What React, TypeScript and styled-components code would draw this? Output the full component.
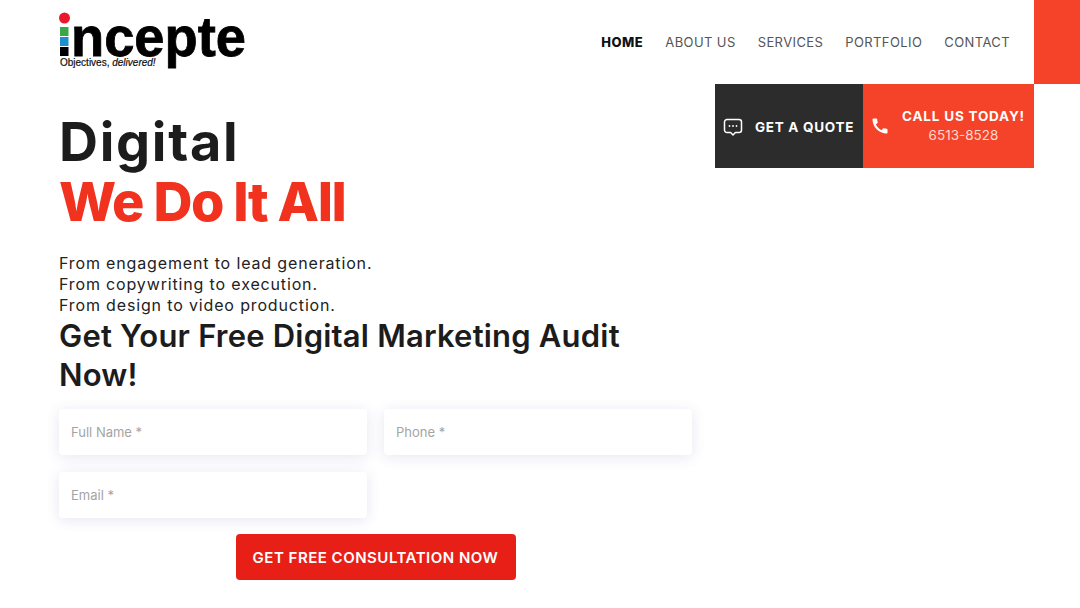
import React from 'react';
import styled, { createGlobalStyle } from 'styled-components';
import { MdCall } from 'react-icons/md';

const GlobalStyle = createGlobalStyle`
  html, body {
    margin: 0;
    padding: 0;
    background: #fff;
  }
  * {
    box-sizing: border-box;
  }
  body {
    font-family: 'Inter', 'Open Sans', sans-serif;
    color: #1c1c1c;
  }
`;

const Page = styled.div`
  width: 1080px;
  height: 608px;
  overflow: hidden;
`;

const Header = styled.header`
  height: 84px;
  display: flex;
  align-items: stretch;
  padding-left: 59px;
`;

const LogoWrap = styled.a`
  display: block;
  width: 190px;
  height: 84px;
`;

const Nav = styled.nav`
  margin-left: auto;
  display: flex;
  align-items: center;
  gap: 22px;
  padding-right: 24px;
`;

const NavLink = styled.a<{ $active?: boolean }>`
  font-size: 13px;
  letter-spacing: ${(p) => (p.$active ? '0.5px' : '0.4px')};
  font-weight: ${(p) => (p.$active ? 800 : 400)};
  color: ${(p) => (p.$active ? '#111' : '#555')};
  white-space: nowrap;
`;

const CornerBlock = styled.div`
  width: 46px;
  background: #f54329;
`;

const Body = styled.div`
  display: flex;
  padding-left: 59px;
`;

const Hero = styled.section`
  width: 633px;
  padding-top: 28px;
`;

const Title = styled.h1`
  margin: 0;
  font-size: 54px;
  line-height: 60px;
  font-weight: 700;
  letter-spacing: 1.7px;
  color: #1c1c1c;
`;

const TitleAccent = styled.span`
  display: block;
  font-weight: 800;
  letter-spacing: -1.45px;
  color: #f0321f;
`;

const Lead = styled.p`
  margin: 21px 0 0;
  font-size: 16px;
  line-height: 21px;
  letter-spacing: 0.85px;
  color: #222;
`;

const SubTitle = styled.h2`
  margin: 0;
  font-size: 31px;
  line-height: 39px;
  font-weight: 600;
  letter-spacing: 0.2px;
  color: #1c1c1c;
`;

const Form = styled.form`
  margin-top: 15px;
  display: grid;
  grid-template-columns: 308px 308px;
  column-gap: 17px;
  row-gap: 16.5px;
`;

const Field = styled.input`
  height: 46px;
  border: 0;
  border-radius: 4px;
  padding: 0 12px;
  background: #fff;
  font-family: inherit;
  font-size: 13px;
  box-shadow: 0 2px 14px rgba(70, 80, 160, 0.14);
  outline: none;
  &::placeholder {
    color: #a4a4a4;
    opacity: 1;
  }
`;

const Submit = styled.button`
  grid-column: 1 / -1;
  justify-self: center;
  width: 280px;
  height: 46px;
  border: 0;
  border-radius: 4px;
  background: #e81f17;
  color: #fff;
  font-family: inherit;
  font-size: 15px;
  font-weight: 600;
  letter-spacing: 0.5px;
  white-space: nowrap;
`;

const Actions = styled.aside`
  margin-left: 23px;
  width: 319px;
  height: 84px;
  display: flex;
`;

const QuoteBox = styled.a`
  width: 148px;
  background: #2c2c2c;
  color: #fff;
  display: flex;
  align-items: center;
  padding: 2px 0 0 8px;
  gap: 12px;
  font-size: 13.5px;
  font-weight: 700;
  letter-spacing: 0.7px;
  white-space: nowrap;
`;

const CallBox = styled.a`
  flex: 1;
  background: #f54329;
  color: #fff;
  display: flex;
  align-items: center;
  padding-left: 7px;
`;

const CallText = styled.div`
  flex: 1;
  text-align: center;
  padding: 0 0 2px 3px;
`;

const CallLabel = styled.div`
  font-size: 13.5px;
  font-weight: 700;
  letter-spacing: 0.8px;
  line-height: 19px;
  white-space: nowrap;
`;

const CallNumber = styled.div`
  font-size: 13.5px;
  line-height: 18px;
  color: #fbd9d2;
`;

const Logo = () => (
  <svg width="190" height="84" viewBox="0 0 190 84">
    <circle cx="5.5" cy="18" r="5.5" fill="#e8192c" />
    <rect x="1" y="27" width="8.5" height="9" fill="#3aa648" />
    <rect x="1" y="37" width="8.5" height="9" fill="#1c8fd0" />
    <rect x="1" y="47" width="8.5" height="9" fill="#000" />
    <text
      x="12"
      y="56"
      fontFamily="'Liberation Sans', sans-serif"
      fontWeight="700"
      fontSize="55"
      textLength="175"
      lengthAdjust="spacingAndGlyphs"
      fill="#000"
      stroke="#000"
      strokeWidth="0.8"
    >
      ncepte
    </text>
    <text
      x="1"
      y="66"
      fontFamily="'Liberation Sans', sans-serif"
      fontWeight="400"
      fontSize="10"
      fill="#111"
      stroke="#111"
      strokeWidth="0.2"
    >
      Objectives, <tspan fontStyle="italic">delivered!</tspan>
    </text>
  </svg>
);

const ChatIcon = () => (
  <svg width="20" height="20" viewBox="0 0 20 20" fill="none" stroke="#fff" strokeWidth="1.5">
    <path d="M4 2.5h12a2.5 2.5 0 0 1 2.5 2.5v8a2.5 2.5 0 0 1-2.5 2.5h-3.6L10 18l-2.4-2.5H4A2.5 2.5 0 0 1 1.5 13V5A2.5 2.5 0 0 1 4 2.5z" strokeLinejoin="round" />
    <circle cx="6.5" cy="9" r="0.9" fill="#fff" stroke="none" />
    <circle cx="10" cy="9" r="0.9" fill="#fff" stroke="none" />
    <circle cx="13.5" cy="9" r="0.9" fill="#fff" stroke="none" />
  </svg>
);

export default function App() {
  return (
    <Page>
      <GlobalStyle />
      <Header>
        <LogoWrap>
          <Logo />
        </LogoWrap>
        <Nav>
          <NavLink $active>HOME</NavLink>
          <NavLink>ABOUT US</NavLink>
          <NavLink>SERVICES</NavLink>
          <NavLink>PORTFOLIO</NavLink>
          <NavLink>CONTACT</NavLink>
        </Nav>
        <CornerBlock />
      </Header>
      <Body>
        <Hero>
          <Title>
            Digital
            <TitleAccent>We Do It All</TitleAccent>
          </Title>
          <Lead>
            From engagement to lead generation.
            <br />
            From copywriting to execution.
            <br />
            From design to video production.
          </Lead>
          <SubTitle>Get Your Free Digital Marketing Audit Now!</SubTitle>
          <Form>
            <Field placeholder="Full Name *" />
            <Field placeholder="Phone *" />
            <Field placeholder="Email *" />
            <span />
            <Submit type="button">GET FREE CONSULTATION NOW</Submit>
          </Form>
        </Hero>
        <Actions>
          <QuoteBox>
            <ChatIcon />
            GET A QUOTE
          </QuoteBox>
          <CallBox>
            <MdCall size={20} />
            <CallText>
              <CallLabel>CALL US TODAY!</CallLabel>
              <CallNumber>6513-8528</CallNumber>
            </CallText>
          </CallBox>
        </Actions>
      </Body>
    </Page>
  );
}
